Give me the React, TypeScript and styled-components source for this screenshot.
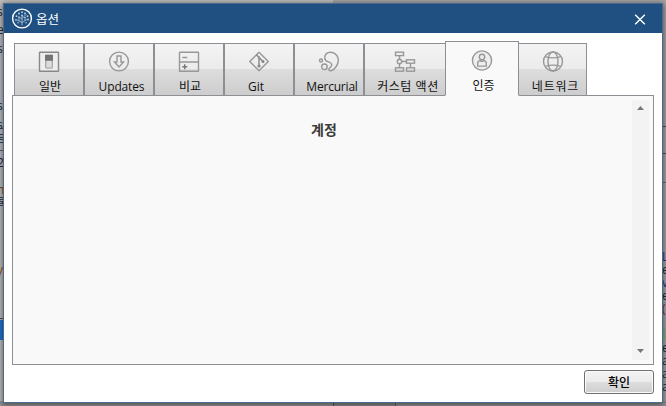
import React from "react";
import styled, { createGlobalStyle } from "styled-components";

const GlobalStyle = createGlobalStyle`
  *, *::before, *::after { box-sizing: border-box; }
  html, body { margin: 0; height: 100%; overflow: hidden; }
  body { font-family: "Open Sans", "Noto Sans CJK KR", sans-serif; font-size: 12px; color: #111; }
`;

const Desktop = styled.div`
  position: relative;
  width: 666px;
  height: 406px;
  padding: 3px;
  overflow: hidden;
  background: linear-gradient(90deg, #c4c2c0 0 50%, #a9a9ab 50%);
`;

const BottomStrip = styled.div`
  position: absolute;
  left: 0;
  right: 0;
  bottom: 0;
  height: 5px;
  background: linear-gradient(90deg, #969696 0 333px, #555 333px 334px, #8c8c8c 334px 395px, #666 395px 396px, #949494 396px);
`;

const Fragment = styled.span<{ $x: number; $y: number; $color?: string }>`
  position: absolute;
  left: ${(p) => p.$x}px;
  top: ${(p) => p.$y}px;
  font-size: 12px;
  line-height: 12px;
  color: ${(p) => p.$color ?? "#262b35"};
`;

const Patch = styled.div<{ $x: number; $y: number; $w: number; $h: number; $color: string }>`
  position: absolute;
  left: ${(p) => p.$x}px;
  top: ${(p) => p.$y}px;
  width: ${(p) => p.$w}px;
  height: ${(p) => p.$h}px;
  background: ${(p) => p.$color};
`;

const Window = styled.section`
  position: relative;
  display: flex;
  flex-direction: column;
  width: 660px;
  height: 400px;
  border: 1px solid #4a6b8d;
  background: #fff;
  box-shadow: 0 1px 6px 1px rgba(0, 0, 0, 0.5);
`;

const TitleBar = styled.header`
  display: flex;
  align-items: center;
  height: 29px;
  flex: none;
  padding: 0 16px 0 7px;
  background: #205081;
  color: #fff;
`;

const Title = styled.h1`
  flex: 1;
  margin: 3px 0 0 3px;
  font-size: 12.5px;
  line-height: 20px;
  font-weight: 400;
`;

const CloseButton = styled.button`
  display: flex;
  padding: 0;
  border: 0;
  background: none;
  color: #fff;
`;

const TabStrip = styled.nav`
  display: flex;
  align-items: flex-end;
  flex: none;
  height: 63px;
  padding-left: 10px;
  z-index: 1;
`;

const Tab = styled.button<{ $width: number; $active?: boolean }>`
  display: flex;
  flex-direction: column;
  align-items: center;
  position: relative;
  z-index: ${(p) => (p.$active ? 1 : 0)};
  flex: none;
  width: ${(p) => p.$width}px;
  height: ${(p) => (p.$active ? 55 : 53)}px;
  margin: ${(p) => (p.$active ? "0 -1px" : "0")};
  padding: ${(p) => (p.$active ? 8 : 7)}px 0 0;
  border: 1px solid #8e8f94;
  border-bottom-color: ${(p) => (p.$active ? "#f9f9f9" : "#8e8f94")};
  background: ${(p) =>
    p.$active ? "#f9f9f9" : "linear-gradient(#f4f4f4 0%, #ebebeb 50%, #dddddd 50%, #cdcdcd 100%)"};
  color: #111;
  font: inherit;
`;

const TabLabel = styled.span<{ $shift: number; $spacing?: number }>`
  margin-top: 5px;
  line-height: 18px;
  white-space: nowrap;
  letter-spacing: ${(p) => p.$spacing ?? 0}px;
  transform: translateX(${(p) => p.$shift}px);
`;

const Panel = styled.main`
  display: flex;
  flex: none;
  width: 642px;
  height: 270px;
  margin: -1px 0 0 8px;
  border: 1px solid #8e8f94;
  background: #f9f9f9;
`;

const PanelContent = styled.div`
  flex: 1;
  padding: 24px 0 0 3px;
  text-align: center;
`;

const Heading = styled.h2`
  margin: 0;
  font-size: 14px;
  line-height: 20px;
  font-weight: 700;
  color: #3b3b3b;
`;

const Scrollbar = styled.div`
  display: flex;
  flex-direction: column;
  align-items: center;
  justify-content: space-between;
  width: 17px;
  height: 260px;
  margin: 4px 4px 0 0;
  padding: 6px 0 7px;
  background: #f3f3f3;
`;

const Footer = styled.footer`
  display: flex;
  justify-content: flex-end;
  padding: 5px 8px 0 0;
`;

const OkButton = styled.button`
  width: 70px;
  height: 24px;
  padding: 1px 0 0;
  border: 1px solid #707070;
  border-radius: 3px;
  background: linear-gradient(#f3f3f3 0%, #ebebeb 50%, #dddddd 50%, #cfcfcf 100%);
  box-shadow: inset 0 0 0 1px #fafafa;
  color: #000;
  font: 500 12px/21px "Open Sans", "Noto Sans CJK KR", sans-serif;
`;

const Icon = styled.svg`
  display: block;
  flex: none;
  fill: none;
  stroke: #989898;
  stroke-width: 1.4;
`;

const TabIcon = ({ children }: { children: React.ReactNode }) => (
  <Icon width="22" height="22" viewBox="0 0.5 22 22">{children}</Icon>
);

const tabs = [
  {
    label: "일반", width: 70, shift: 1,
    icon: <><rect x="1.5" y="1.8" width="19" height="19" rx=".5" stroke="#888" fill="#eee" /><rect x="7.7" y="5" width="6.6" height="12.6" rx="1" stroke="#aaa" fill="#ddd" /><path d="M7.7 5h6.6v4.6H7.7z" fill="#747474" stroke="#747474" /></>,
  },
  {
    label: "Updates", width: 70, shift: 2.5, spacing: -0.15,
    icon: <><circle cx="11" cy="11" r="9.4" /><path d="M9 5.5h4v6h2.5L11 16.5 6.5 11.5H9z" /></>,
  },
  {
    label: "비교", width: 70, shift: 1,
    icon: <><rect x="1.5" y="1.8" width="19" height="19" rx=".5" /><path d="M1.5 11.5h19M4.3 7h4.9" /><path d="M4.3 16.3h4.9M6.7 13.8v5" stroke="#777" /></>,
  },
  {
    label: "Git", width: 70, shift: -3,
    icon: <><path d="M11 1.7 20.3 11 11 20.3 1.7 11z" strokeLinejoin="round" /><path d="M8.3 4.2 11 6.7v8.8M11 7l4.2 4.2" stroke="#858585" /><circle cx="11" cy="15.5" r=".9" fill="#888" stroke="#888" /><circle cx="15" cy="11" r=".8" fill="#888" stroke="#888" /><circle cx="11" cy="7" r=".6" fill="#888" /></>,
  },
  {
    label: "Mercurial", width: 70, shift: 3, spacing: -0.2,
    icon: <><path d="M6.8 6.5C7.3 1.8 12.4.9 16 2.6c4.8 2.4 5.6 8.9 2.2 13.4-1.8 2.4-4.5 4.4-6.2 4.2-1.6-.3-1.4-1.6-.4-2.6 1.1-1 2.3-2 2.2-3.5-.2-1.9-2.1-2.3-3.8-2.9-2-.6-3.5-2.2-3.2-4.7z" /><circle cx="3" cy="10" r="1.5" /><circle cx="6.4" cy="16.3" r="2.8" /></>,
  },
  {
    label: "커스텀 액션", width: 82, shift: 3, spacing: 0.55,
    icon: <><rect x="1.5" y="1.7" width="8" height="3.4" /><rect x="1.5" y="17.3" width="8" height="3.4" /><rect x="12.5" y="9.3" width="8" height="3.4" /><rect x="12.5" y="17.3" width="8" height="3.4" /><circle cx="5.5" cy="11" r="2.2" /><path d="M5.5 5.1v3.7M5.5 13.2v4.1M7.7 11h4.8M16.5 12.7v4.6" /></>,
  },
  {
    label: "인증", width: 74, shift: 1.5, active: true,
    icon: <><circle cx="11" cy="11" r="9.6" fill="#eee" /><circle cx="11" cy="7.5" r="2.7" /><path d="M6.7 16.6v-2.5c0-2 1.3-3 2.6-3 1 .8 2.4.8 3.4 0 1.3 0 2.6 1 2.6 3v2.5z" /></>,
  },
  {
    label: "네트워크", width: 69, shift: 3, spacing: 0.8,
    icon: <><circle cx="11" cy="11" r="9.5" /><ellipse cx="11" cy="11" rx="5" ry="9.5" /><path d="M3.2 6.2c4.8 1.5 10.8 1.5 15.6 0M3.2 15.8c4.8-1.5 10.8-1.5 15.6 0" /></>,
  },
];

const Logo = () => (
  <svg width="22" height="22" viewBox="0 0.5 22 22" fill="none" stroke="#fff">
    <circle cx="11" cy="11" r="9.4" strokeWidth="1.4" />
    <path d="M11 18V8M11 15 6 12.5M11 15l5-3M11 12 7.5 8.5M11 11l4-4M8 13.5v-3M14 13v-3" strokeWidth=".8" opacity=".65" />
    <g fill="#c0d3e5" stroke="none">
      <circle cx="11" cy="4.7" r=".9" /><circle cx="8" cy="6" r=".9" /><circle cx="14" cy="6" r=".9" />
      <circle cx="5.5" cy="8.7" r=".9" /><circle cx="16.5" cy="8.7" r=".9" /><circle cx="11" cy="8" r=".9" />
      <circle cx="5" cy="12.3" r=".9" /><circle cx="17" cy="12" r=".9" /><circle cx="8" cy="10" r=".8" />
      <circle cx="14" cy="10" r=".8" /><circle cx="7" cy="15.2" r=".7" /><circle cx="15" cy="15.2" r=".7" />
    </g>
  </svg>
);

const Arrow = ({ down = false }) => (
  <svg width="7" height="4" viewBox="0 0 7 4">
    <path d={down ? "M0 0h7L3.5 4z" : "M0 4h7L3.5 0z"} fill="#777" />
  </svg>
);

const leftText = [
  { y: 6, text: "s" }, { y: 24, text: "e" }, { y: 43, text: "s" }, { y: 100, text: "s" },
  { y: 119, text: "s" }, { y: 134, text: "트" }, { y: 157, text: "2" }, { y: 184, text: "n", color: "#89450c" },
  { y: 198, text: "록" }, { y: 264, text: "y", color: "#a14d10" },
];
const rightText = [
  { y: 251, text: "L", color: "#203580" }, { y: 264, text: "e" }, { y: 277, text: "v", color: "#203580" },
  { y: 290, text: "e" }, { y: 303, text: "(", color: "#8b2535" }, { y: 342, text: "e" },
  { y: 355, text: "a" }, { y: 368, text: "a" }, { y: 381, text: "a" },
];

export default function App() {
  return (
    <>
      <GlobalStyle />
      <Desktop>
        <BottomStrip />
        <Patch $x={0} $y={128} $w={4} $h={1} $color="#666" />
        <Patch $x={0} $y={150} $w={4} $h={1} $color="#666" />
        <Patch $x={0} $y={318} $w={4} $h={1} $color="#555" />
        <Patch $x={0} $y={320} $w={4} $h={20} $color="#2478d8" />
        <Patch $x={662} $y={126} $w={4} $h={1} $color="#4d4d4f" />
        <Patch $x={662} $y={153} $w={4} $h={1} $color="#4d4d4f" />
        <Patch $x={662} $y={182} $w={4} $h={1} $color="#6d6d6f" />
        <Patch $x={662} $y={327} $w={4} $h={14} $color="#8fae91" />
        {leftText.map((t) => <Fragment key={t.y} $x={-3} $y={t.y} $color={t.color}>{t.text}</Fragment>)}
        {rightText.map((t) => <Fragment key={t.y} $x={662} $y={t.y} $color={t.color}>{t.text}</Fragment>)}
        <Window>
          <TitleBar>
            <Logo />
            <Title>옵션</Title>
            <CloseButton aria-label="닫기">
              <svg width="12" height="12" viewBox="0 0 12 12" stroke="currentColor" strokeWidth="1.4">
                <path d="m1.2 1.7 9.6 9.6M10.8 1.7l-9.6 9.6" />
              </svg>
            </CloseButton>
          </TitleBar>
          <TabStrip>
            {tabs.map((t) => (
              <Tab key={t.label} $width={t.width} $active={t.active}>
                <TabIcon>{t.icon}</TabIcon>
                <TabLabel $shift={t.shift} $spacing={t.spacing}>{t.label}</TabLabel>
              </Tab>
            ))}
          </TabStrip>
          <Panel>
            <PanelContent><Heading>계정</Heading></PanelContent>
            <Scrollbar><Arrow /><Arrow down /></Scrollbar>
          </Panel>
          <Footer><OkButton>확인</OkButton></Footer>
        </Window>
      </Desktop>
    </>
  );
}
